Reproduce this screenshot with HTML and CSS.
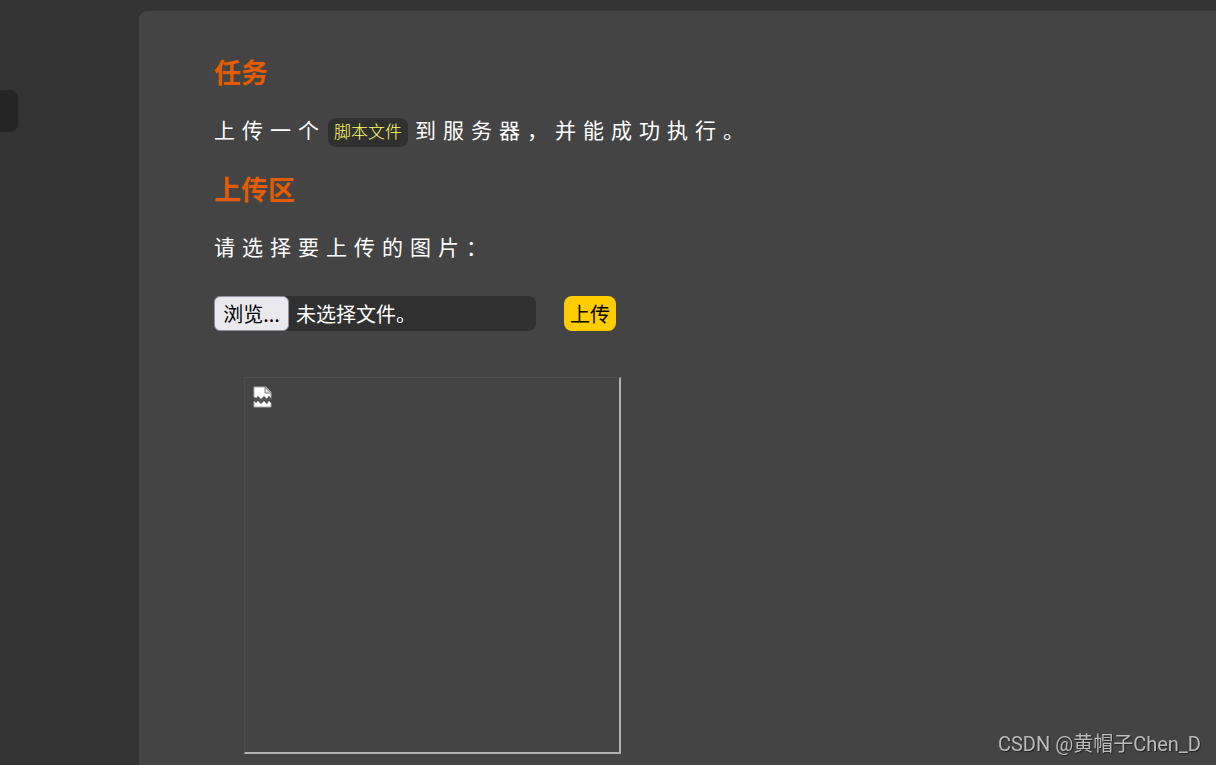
FILE: index.html
```html
<!DOCTYPE html>
<html lang="zh-CN">
<head>
  <meta charset="UTF-8">
  <title>上传</title>
  <link rel="stylesheet" href="styles.css">
</head>
<body>
  <div class="page">
    <div class="side">
      <div class="side-item"></div>
    </div>

    <main class="panel">
      <h3>任务</h3>
      <p>上传一个<code>脚本文件</code>到服务器，并能成功执行。</p>

      <h3>上传区</h3>
      <form class="upload" onsubmit="return false">
        <p id="uploadHint">请选择要上传的图片：</p>
        <div class="upload-row">
          <div class="file-box">
            <input type="file" id="uploadFile" aria-describedby="uploadHint">
            <label for="uploadFile" class="browse">浏览...</label>
            <span id="fileName">未选择文件。</span>
          </div>
          <button type="submit" class="submit">上传</button>
        </div>
      </form>

      <div class="preview">
        <svg width="20" height="22" viewBox="0 0 20 22" role="img" aria-label="图片">
          <path d="M1 1H13L18 6V13L16 11L14 14L11 11L8 14L5 11L3 13L1 11Z" fill="#fff" stroke="#aaa"/>
          <path d="M12 1V7H18Z" fill="#ddd" stroke="#888"/>
          <path d="M1 12L3 14L5 12L8 15L11 12L14 15L16 12L18 14" fill="none" stroke="#555" stroke-width="3"/>
          <path d="M1 15L3 17L5 15L8 18L11 15L14 18L16 15L18 17V21H1Z" fill="#fff" stroke="#aaa"/>
        </svg>
      </div>
    </main>
  </div>

  <div class="watermark">CSDN @黄帽子Chen_D</div>

  <script>
    const input = document.getElementById("uploadFile");
    input.addEventListener("change", () => {
      const name = document.getElementById("fileName");
      name.textContent = input.files.length ? input.files[0].name : "未选择文件。";
    });
  </script>
</body>
</html>
```

FILE: styles.css
```css
* {
  box-sizing: border-box;
}

body {
  margin: 0;
  background-color: #333;
  color: #fff;
  font-family: "Noto Sans CJK SC", sans-serif;
}

.page {
  display: grid;
  grid-template-columns: 139px 1fr;
  min-height: 100vh;
  padding-top: 11px;
}

.side {
  padding-top: 79px;
}

.side-item {
  width: 18px;
  height: 42px;
  background-color: #252525;
  border-radius: 0 8px 8px 0;
}

.panel {
  padding: 43px 75px 11px;
  background-color: #444;
  border-top-left-radius: 8px;
}

h3 {
  margin: 0;
  color: #e35c00;
  font-size: 27px;
  line-height: 36px;
}

p {
  margin: 19px 0 22px;
  font-size: 21px;
  line-height: 40px;
  letter-spacing: 7px;
}

code {
  display: inline-block;
  margin: 0 7px 0 2px;
  padding: 0 6px 4px;
  background-color: #303030;
  border-radius: 8px;
  color: #ff6;
  font-family: "Noto Sans CJK SC", sans-serif;
  font-size: 17px;
  font-weight: 300;
  line-height: 25px;
  letter-spacing: 0;
}

.upload-row {
  display: flex;
  align-items: center;
  gap: 28px;
  margin-top: 30px;
  font-size: 20px;
}

.file-box {
  display: flex;
  align-items: center;
  gap: 7px;
  width: 322px;
  height: 35px;
  background-color: #303030;
  border-radius: 8px;
}

.file-box input {
  position: absolute;
  width: 1px;
  height: 1px;
  opacity: 0;
}

.browse {
  width: 75px;
  border: 1px solid #8f8f9d;
  border-radius: 6px;
  background-color: #e9e9ed;
  color: #000;
  line-height: 33px;
  text-align: center;
  cursor: pointer;
}

.browse:hover {
  background-color: #d0d0d7;
}

.submit {
  height: 35px;
  padding: 0 6px;
  border: none;
  border-radius: 8px;
  background-color: #fc0;
  color: #000;
  font-family: inherit;
  font-size: 20px;
  line-height: 35px;
  cursor: pointer;
}

.preview {
  width: 377px;
  height: 377px;
  margin: 46px 0 0 30px;
  padding: 8px;
  border: 1px solid #4d4d4d;
  border-right: 2px solid #b2b2b2;
  border-bottom: 2px solid #b2b2b2;
}

.preview svg {
  display: block;
}

.watermark {
  position: fixed;
  right: 15px;
  bottom: 8px;
  color: #bbb;
  font-family: Roboto, "Noto Sans CJK SC", sans-serif;
  font-size: 20px;
  line-height: 26px;
  text-shadow: 1px 1px 1px #222;
}
```
